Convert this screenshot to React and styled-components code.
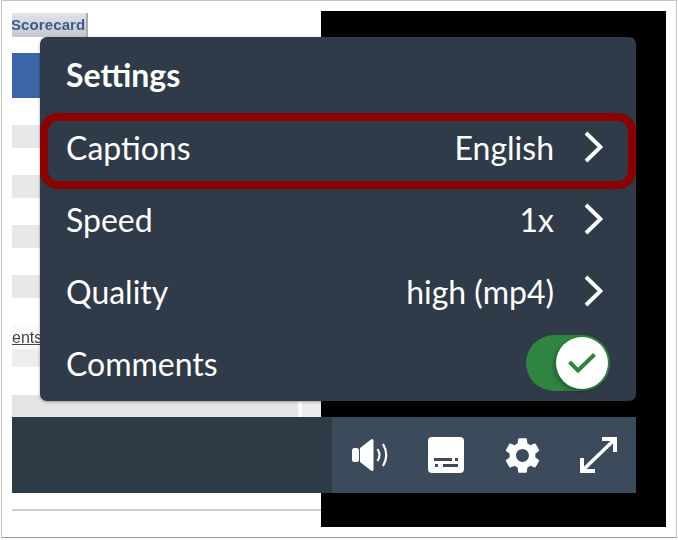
import React from 'react';
import styled, { createGlobalStyle } from 'styled-components';
import { MdSettings } from 'react-icons/md';


const GlobalStyle = createGlobalStyle`
	html, body {
		margin: 0;
		padding: 0;
		background-color: #ffffff;
	}
`;

const Frame = styled.div`
	box-sizing: border-box;
	width: 676px;
	height: 538px;
	margin-left: 1px;
	padding: 10px;

	background-color: #ffffff;
	border: 1px solid #c4c4c4;
	border-bottom-color: #9a9a9a;
`;

const Stage = styled.div`
	position: relative;
	display: grid;
	grid-template-columns: 309px 345px;
	height: 516px;
	overflow: hidden;
`;


//Page behind the video player
const PageColumn = styled.div`
	display: flex;
	flex-direction: column;
	overflow: hidden;
	background-color: #ffffff;
`;

const VideoColumn = styled.div`
	background-color: #000000;
`;

const ScorecardButton = styled.div`
	box-sizing: border-box;
	width: 76px;
	height: 24px;
	margin-top: 2px;
	overflow: hidden;

	font: bold 15px/24px "Liberation Sans", sans-serif;
	letter-spacing: 0.1px;
	color: #3f5a8c;
	text-indent: -1px;
	white-space: nowrap;
	filter: blur(0.5px);

	background: linear-gradient(#e0e3e8, #c4c7cd);
	border-right: 2px solid #a9adb3;
`;

const BlueBand = styled.div`
	height: 45px;
	margin-top: 16px;
	background-color: #3a65a8;
`;

const GrayRow = styled.div`
	height: 23px;
	margin-top: 27px;
	background-color: #e8e8e8;
`;

const LinkRow = styled.div`
	height: 42px;
	margin-top: 27px;
	background: linear-gradient(#fafafa 55%, #eeeeee 60%);

	font: 16px/26px "Liberation Sans", sans-serif;
	color: #444444;
	text-decoration: underline;
	filter: blur(0.4px);
`;

const LastRow = styled.div`
	height: 22px;
	margin-top: 28px;
	background: linear-gradient(to right, #e4e4e4 286px, #fafafa 286px, #fafafa 290px, #ececec 290px);
`;

const PageRule = styled.div`
	height: 2px;
	margin-top: 92px;
	background-color: #cfcfcf;
`;


//Video player overlay
const Player = styled.div`
	position: absolute;
	top: 26px;
	left: 0;
	width: 624px;

	display: flex;
	flex-direction: column;
	align-items: flex-end;
	gap: 16px;

	font-family: Lato, "Open Sans", sans-serif;
	color: #ffffff;
`;

const Menu = styled.div`
	box-sizing: border-box;
	width: 596px;
	height: 364px;
	padding-top: 2px;

	background-color: #2f3b48;
	border-radius: 7px;
	box-shadow: 0 1px 3px rgba(0, 0, 0, 0.35);
`;

const MenuTitle = styled.div`
	height: 72px;
	padding: 0 26px;

	font-size: 32px;
	font-weight: 700;
	line-height: 72px;
`;

const MenuRow = styled.div`
	position: relative;
	display: flex;
	align-items: center;
	justify-content: space-between;
	height: 72px;
	padding: 0 26px;

	font-size: 32px;

	${props => props.$highlighted && `
		&::after {
			content: "";
			position: absolute;
			top: 2px;
			left: 0;
			right: 0;
			height: 76px;
			box-sizing: border-box;
			border: 8px solid #8b0000;
			border-radius: 18px;
		}
	`}
`;

const ValueGroup = styled.div`
	display: flex;
	align-items: center;
	gap: 30px;
	padding-right: 7px;
`;

const Chevron = () => (
	<svg width="19" height="32" viewBox="0 0 19 32" fill="none">
		<path d="M2 2L16.5 16L2 30" stroke="#ffffff" strokeWidth="4" />
	</svg>
);

const Toggle = styled.div`
	box-sizing: border-box;
	display: flex;
	justify-content: flex-end;
	align-items: center;
	width: 84px;
	height: 56px;
	padding-right: 2px;

	background-color: #2f8540;
	border-radius: 28px;
`;

const ToggleKnob = styled.div`
	display: flex;
	align-items: center;
	justify-content: center;
	width: 52px;
	height: 52px;

	background-color: #ffffff;
	border-radius: 50%;
	box-shadow: -2px 2px 4px rgba(0, 0, 0, 0.3);
`;

const ControlBar = styled.div`
	display: flex;
	justify-content: flex-end;
	align-self: stretch;
	height: 76px;
	background-color: #2d3b46;
`;

const Controls = styled.div`
	display: flex;
	background-color: #3c4b5c;
`;

const ControlButton = styled.div`
	display: flex;
	align-items: center;
	justify-content: center;
	width: 76px;
	height: 76px;
`;


//Icons
const VolumeIcon = () => (
	<svg width="37" height="34" viewBox="0 0 37 34" fill="none">
		<rect x="0" y="10" width="7" height="14" rx="2.5" fill="#ffffff" />
		<path d="M8 10L19 1.5Q21.5 0 21.5 2.5V31.5Q21.5 34 19 32.5L8 24Z" fill="#ffffff" />
		<path d="M25.5 11Q29.5 17 25.5 23" stroke="#ffffff" strokeWidth="2.2" />
		<path d="M31 6Q37.5 17 31 28" stroke="#ffffff" strokeWidth="2.2" />
	</svg>
);

const CaptionsIcon = () => (
	<svg width="36" height="36" viewBox="0 0 36 36">
		<rect width="36" height="36" rx="4" fill="#ffffff" />
		<path d="M6 22.5H24M27 22.5H30M7 28.5H10M15 28.5H30" stroke="#3c4b5c" strokeWidth="3" />
	</svg>
);

const ExpandIcon = () => (
	<svg width="37" height="36" viewBox="0 0 37 36" fill="none">
		<path d="M22 2H35V15M15 34H2V21" stroke="#ffffff" strokeWidth="4" />
		<path d="M33 4L4 32" stroke="#ffffff" strokeWidth="3.5" />
	</svg>
);

const CheckIcon = () => (
	<svg width="28" height="20" viewBox="0 0 28 20" fill="none">
		<path d="M1.5 9L10 17.5L26.5 1.5" stroke="#2f8540" strokeWidth="4" />
	</svg>
);


//Main component content
const App = () => {

	const rows = [
		{ label: 'Captions', value: 'English', highlighted: true },
		{ label: 'Speed', value: '1x' },
		{ label: 'Quality', value: 'high (mp4)' },
	];

	//Component render
	return (
		<>
			<GlobalStyle />
			<Frame>
				<Stage>
					<PageColumn>
						<ScorecardButton>Scorecard</ScorecardButton>
						<BlueBand />
						<GrayRow />
						<GrayRow />
						<GrayRow />
						<GrayRow />
						<LinkRow>ents</LinkRow>
						<LastRow />
						<PageRule />
					</PageColumn>
					<VideoColumn />
					<Player>
						<Menu>
							<MenuTitle>Settings</MenuTitle>
							{rows.map( row => (
								<MenuRow key={row.label} $highlighted={row.highlighted} >
									<span>{row.label}</span>
									<ValueGroup>
										<span>{row.value}</span>
										<Chevron />
									</ValueGroup>
								</MenuRow>
							) )}
							<MenuRow>
								<span>Comments</span>
								<Toggle>
									<ToggleKnob>
										<CheckIcon />
									</ToggleKnob>
								</Toggle>
							</MenuRow>
						</Menu>
						<ControlBar>
							<Controls>
								<ControlButton><VolumeIcon /></ControlButton>
								<ControlButton><CaptionsIcon /></ControlButton>
								<ControlButton><MdSettings size={43} color="#ffffff" /></ControlButton>
								<ControlButton><ExpandIcon /></ControlButton>
							</Controls>
						</ControlBar>
					</Player>
				</Stage>
			</Frame>
		</>
	);
};


export default App;
